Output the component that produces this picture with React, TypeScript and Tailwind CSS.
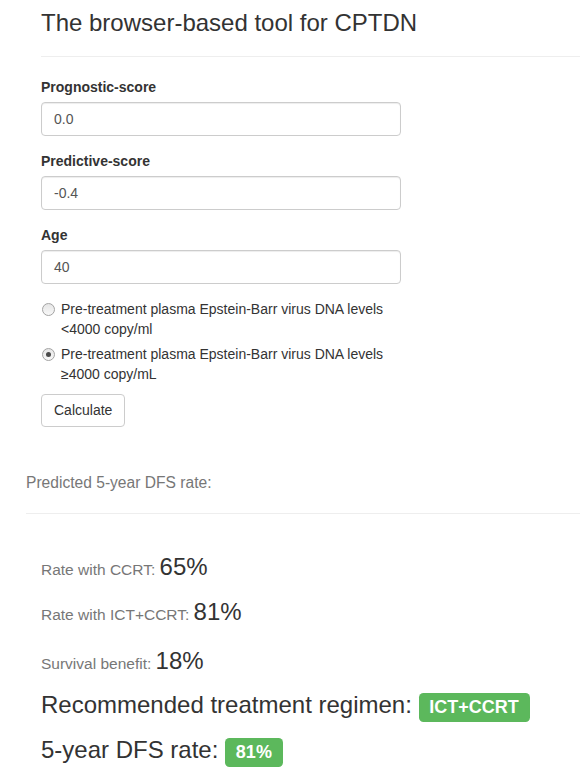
import React from "react";

function Field({ label, value, first }: { label: string; value: string; first?: boolean }) {
  return (
    <div className={first ? "mt-[20px]" : "mt-[15px]"}>
      <label className="block text-[14px] font-bold leading-[20px] mb-[5px] text-[#333]">{label}</label>
      <div className="h-[34px] w-full border border-[#ccc] rounded-[4px] px-[12px] flex items-center text-[14px] text-[#555] shadow-[inset_0_1px_1px_rgba(0,0,0,0.075)]">
        {value}
      </div>
    </div>
  );
}

function Radio({ checked, children, first }: { checked?: boolean; children: React.ReactNode; first?: boolean }) {
  return (
    <div className={`flex ${first ? "" : "mt-[5px]"}`}>
      <span className="mt-[4px] ml-[1px] w-[13px] h-[13px] shrink-0 rounded-full border border-[#a3a3a3] bg-gradient-to-b from-[#e6e6e6] to-[#f8f8f8] flex items-center justify-center">
        {checked ? <span className="w-[5px] h-[5px] rounded-full bg-[#4a4a4a]" /> : null}
      </span>
      <span className="ml-[6px] text-[14px] leading-[20px] text-[#333]">{children}</span>
    </div>
  );
}

export default function App() {
  return (
    <div className="min-h-screen bg-white text-[#333] font-['Liberation_Sans',Arial,sans-serif] overflow-hidden">
      <div className="pl-[41px]">
        <h3 className="pt-[10px] text-[24px] leading-[26.4px] font-normal text-[#333]">The browser-based tool for CPTDN</h3>
        <div className="mt-[20px] border-t border-[#eee]" />
        <div className="w-[360px]">
          <Field label="Prognostic-score" value="0.0" first />
          <Field label="Predictive-score" value="-0.4" />
          <Field label="Age" value="40" />
          <div className="mt-[15px]">
            <Radio first>
              Pre-treatment plasma Epstein-Barr virus DNA levels &lt;4000 copy/ml
            </Radio>
            <Radio checked>
              Pre-treatment plasma Epstein-Barr virus DNA levels ≥4000 copy/mL
            </Radio>
          </div>
          <div className="mt-[10px]">
            <div className="inline-flex items-center h-[33px] px-[12px] border border-[#ccc] rounded-[4px] text-[14px] text-[#333] bg-white">
              Calculate
            </div>
          </div>
        </div>
      </div>
      <div className="pl-[26px]">
        <div className="mt-[46px] text-[15.6px] leading-[20px] text-[#777]">Predicted 5-year DFS rate:</div>
        <div className="mt-[20px] border-t border-[#eee]" />
        <div className="pl-[15px]">
          <div className="mt-[40px] text-[24px] leading-[26.4px] text-[#333]">
            <span className="text-[15.5px] text-[#777]">Rate with CCRT: </span>65%
          </div>
          <div className="mt-[15px] text-[24px] leading-[26.4px] text-[#333]">
            <span className="text-[15.5px] text-[#777]">Rate with ICT+CCRT: </span>81%
          </div>
          <div className="mt-[20px] text-[24px] leading-[26.4px] text-[#333]">
            <span className="text-[15.5px] text-[#777]">Survival benefit: </span>18%
          </div>
          <div className="mt-[14px] text-[24px] leading-[26.4px] text-[#333]">
            Recommended treatment regimen:{" "}
            <span className="bg-[#5cb85c] text-white font-bold text-[18px] leading-none px-[0.6em] pt-[0.2em] pb-[0.3em] rounded-[0.25em]">ICT+CCRT</span>
          </div>
          <div className="mt-[19px] text-[24px] leading-[26.4px] text-[#333]">
            5-year DFS rate:{" "}
            <span className="bg-[#5cb85c] text-white font-bold text-[18px] leading-none px-[0.6em] pt-[0.2em] pb-[0.3em] rounded-[0.25em]">81%</span>
          </div>
        </div>
      </div>
    </div>
  );
}
